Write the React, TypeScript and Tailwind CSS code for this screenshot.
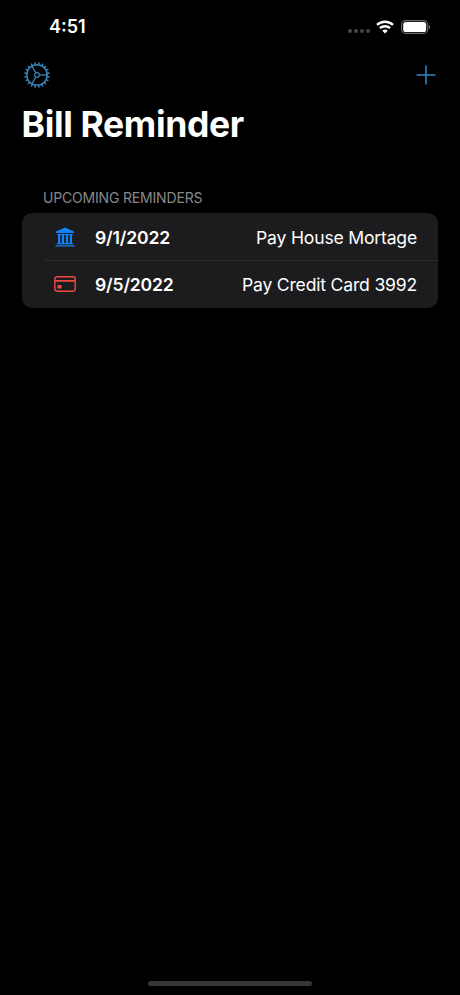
import React from 'react';

interface Reminder {
  date: string;
  title: string;
  icon: React.ReactNode;
}

const TEETH = Array.from({ length: 20 }, (_, i) => i * 18 + 9);

const GearIcon: React.FC = () => (
  <svg className="block h-[26px] w-[26px] text-[#3a86bd]" viewBox="-13 -13 26 26" fill="none" stroke="currentColor">
    <circle r="10.2" strokeWidth="1.5" />
    <circle r="2.3" strokeWidth="1.2" />
    {[0, 120, 240].map((angle) => (
      <path key={angle} d="M2.6 0H10.2" strokeWidth="1.3" transform={`rotate(${angle})`} />
    ))}
    {TEETH.map((angle) => (
      <path key={angle} d="M10.8 0H12.7" strokeWidth="1.5" transform={`rotate(${angle})`} />
    ))}
  </svg>
);

const PlusIcon: React.FC = () => (
  <svg className="block h-[20px] w-[20px] text-[#3486c2]" viewBox="0 0 20 20" fill="none" stroke="currentColor" strokeWidth="1.5" strokeLinecap="round">
    <path d="M10 1.1V18.9M1.1 10H18.9" />
  </svg>
);

const WifiIcon: React.FC = () => (
  <svg className="block h-[14px] w-[18px]" viewBox="0 0 18 14" fill="none" stroke="white" strokeWidth="2.4">
    <path d="M1 4.9C5.4.6 12.6.6 17 4.9" />
    <path d="M3.9 8.2C6.7 5.5 11.3 5.5 14.1 8.2" />
    <path d="M9 13.4L6.3 10.7C7.8 9.2 10.2 9.2 11.7 10.7Z" fill="white" stroke="none" />
  </svg>
);

const BatteryIcon: React.FC = () => (
  <svg className="block h-[14px] w-[30px]" viewBox="0 0 30 14">
    <rect x="0.6" y="0.6" width="26.2" height="12.8" rx="4" fill="none" stroke="#6d6d6d" strokeWidth="1.1" />
    <rect x="2.2" y="2" width="23" height="10" rx="2.6" fill="white" />
    <path d="M28 4.9C29.5 5.5 29.5 8.5 28 9.1Z" fill="#777" />
  </svg>
);

const BankIcon: React.FC = () => (
  <svg className="block h-[20px] w-[20px] text-[#1184f7]" viewBox="0 0 20 20" fill="currentColor">
    <path d="M10 .4L19 4.6Q19.5 5.9 18.6 5.9H1.4Q.5 5.9 1 4.6Z" />
    <path d="M2.2 6.9H17.8V8H2.2ZM2 16.1H18V17.3H2ZM.5 18.3H19.5V19.6H.5Z" />
    <path d="M3 7.5H5.2V16.5H3ZM6.9 7.5H9.1V16.5H6.9ZM10.9 7.5H13.1V16.5H10.9ZM14.8 7.5H17V16.5H14.8Z" />
  </svg>
);

const CardIcon: React.FC = () => (
  <svg className="block h-[16px] w-[22px] text-[#ec4b42]" viewBox="0 0 22 16" fill="none" stroke="currentColor" strokeWidth="1.4">
    <rect x="0.8" y="0.8" width="20.4" height="14.4" rx="2.4" />
    <path d="M1 4.8H21" strokeWidth="1.7" />
    <rect x="3.4" y="9" width="4.2" height="3.4" rx="0.7" fill="currentColor" stroke="none" />
  </svg>
);

const reminders: Reminder[] = [
  { date: '9/1/2022', title: 'Pay House Mortage', icon: <BankIcon /> },
  { date: '9/5/2022', title: 'Pay Credit Card 3992', icon: <CardIcon /> },
];

const StatusBar: React.FC = () => (
  <div className="flex h-[53px] items-center justify-between pl-[49px] pr-[29px]">
    <span className="text-[18px] leading-none font-semibold">4:51</span>
    <div className="flex items-center">
      <div className="mt-[9px] mr-[6px] flex gap-[2px]">
        {[0, 1, 2, 3].map((dot) => (
          <span key={dot} className="h-[4px] w-[4px] rounded-full bg-[#464646]" />
        ))}
      </div>
      <WifiIcon />
      <div className="ml-[7px]">
        <BatteryIcon />
      </div>
    </div>
  </div>
);

const App: React.FC = () => {
  return (
    <main className="flex h-[995px] w-[460px] flex-col bg-black font-['Inter',sans-serif] text-white">
      <StatusBar />

      <nav className="flex h-[43px] items-center justify-between pl-[24px] pr-[24px]">
        <button aria-label="Settings">
          <GearIcon />
        </button>
        <button aria-label="Add reminder">
          <PlusIcon />
        </button>
      </nav>

      <h1 className="mt-[7px] pl-[21.5px] text-[35.5px] leading-[44px] font-bold tracking-[-0.35px]">Bill Reminder</h1>

      <section className="mt-[41px] px-[22px]">
        <h2 className="h-[25px] pl-[21px] text-[14px] leading-[20px] font-normal tracking-[-0.18px] text-[#88888b]">
          UPCOMING REMINDERS
        </h2>
        <ul className="overflow-hidden rounded-[10px] bg-[#1c1c1e]">
          {reminders.map((reminder, index) => (
            <li key={reminder.date} className="pl-[21px]">
              <div
                className={`flex items-center pr-[21px] text-[17.6px] tracking-[-0.2px] ${
                  index > 0 ? 'h-[47.5px] border-t border-[#2b2b2e]' : 'h-[47px]'
                }`}
              >
                <span className="flex w-[43px] justify-center">{reminder.icon}</span>
                <span className={`ml-[9px] font-semibold ${index > 0 ? 'pt-px' : 'pt-[3px]'}`}>{reminder.date}</span>
                <span className={`ml-auto ${index > 0 ? 'pt-px' : 'pt-[3px]'}`}>{reminder.title}</span>
              </div>
            </li>
          ))}
        </ul>
      </section>

      <div className="mx-auto mt-auto mb-[9px] h-[5px] w-[164px] rounded-full bg-[#363636]" />
    </main>
  );
};

export default App;
